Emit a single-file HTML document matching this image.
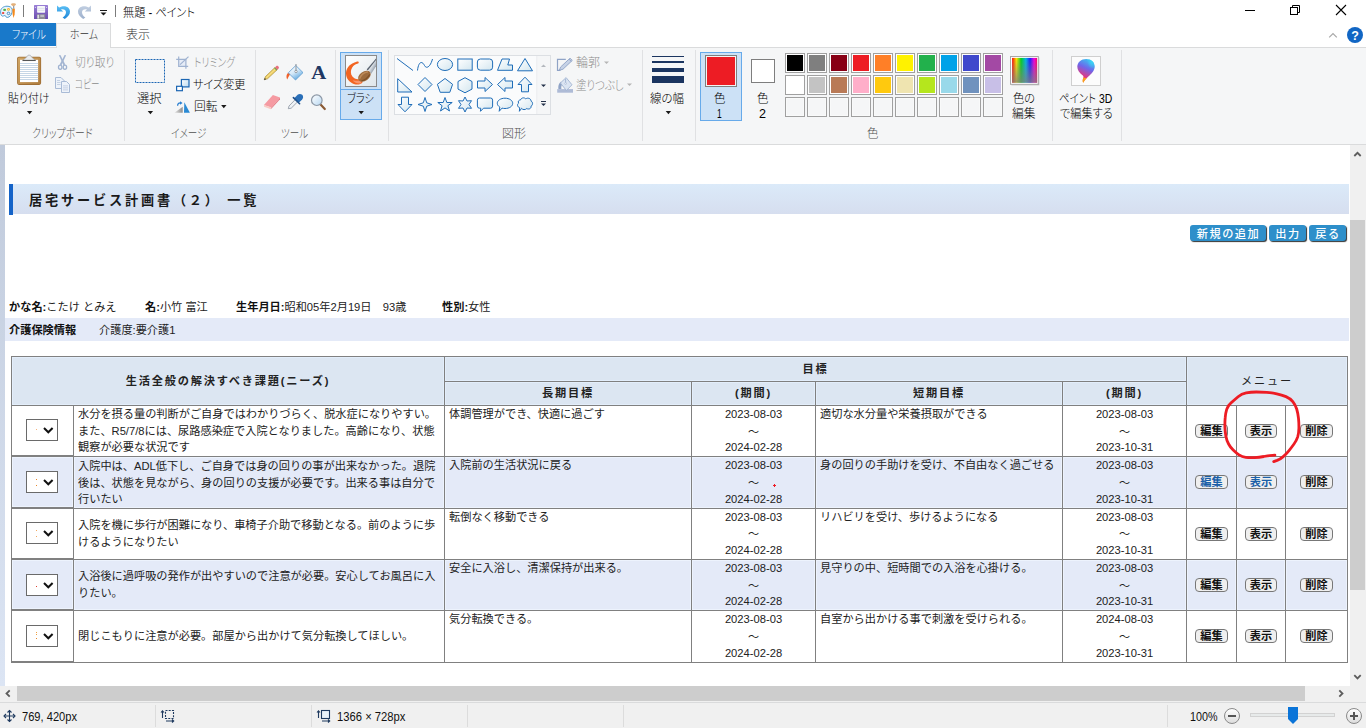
<!DOCTYPE html>
<html lang="ja">
<head>
<meta charset="utf-8">
<title>無題 - ペイント</title>
<style>
*{box-sizing:border-box;margin:0;padding:0}
html,body{width:1366px;height:728px;overflow:hidden;background:#fff}
body{position:relative;font-family:"Liberation Sans","Noto Sans CJK JP",sans-serif;font-size:12px;color:#1e1e1e}
.abs{position:absolute}
svg{position:absolute;overflow:visible}
/* ---------- paint chrome ---------- */
#titlebar{position:absolute;left:0;top:0;width:1366px;height:23px;background:#fff}
#title{position:absolute;left:123px;top:3px;font-size:12px;line-height:16px;color:#000;white-space:nowrap}
#tabs{position:absolute;left:0;top:23px;width:1366px;height:25px;background:#fff;border-bottom:1px solid #dadbdc}
.tab{position:absolute;top:0;height:24px;line-height:22px;text-align:center;font-size:12px;color:#3b3b3b;white-space:nowrap}
#tab-file{left:0;width:56px;height:23px;background:#1979ca;color:#fff}
#tab-home{left:56px;width:55px;background:#f5f6f7;border:1px solid #dadbdc;border-bottom:none;height:25px}
#tab-view{left:110px;width:55px}
#ribbon{position:absolute;left:0;top:48px;width:1366px;height:97px;background:#f5f6f7;border-bottom:1px solid #dadbdc}
.sep{position:absolute;top:5px;width:1px;height:86px;background:#e2e3e4}
.glabel{position:absolute;top:78px;height:16px;line-height:16px;font-size:12px;color:#5f5f5f;text-align:center;white-space:nowrap}
.rtxt{position:absolute;font-size:12px;line-height:16px;color:#1e1e1e;white-space:nowrap}
.dis{color:#9d9d9d}
.arrow{position:absolute;width:0;height:0;border-left:3px solid transparent;border-right:3px solid transparent;border-top:3px solid #1e1e1e}
/* ---------- work area ---------- */
#work{position:absolute;left:0;top:145px;width:1350px;height:541px;background:#fff;overflow:hidden}
#strip{position:absolute;left:0;top:0;width:5px;height:541px;background:linear-gradient(#c0cadb,#dce5f4)}
#vscroll{position:absolute;left:1350px;top:145px;width:16px;height:541px;background:#f0f0f0}
#vthumb{position:absolute;left:0;top:75px;width:15px;height:370px;background:#cdcdcd}
#hscroll{position:absolute;left:0;top:686px;width:1366px;height:16px;background:#f0f0f0}
#hthumb{position:absolute;left:17px;top:0;width:1288px;height:15px;background:#cdcdcd}
#status{position:absolute;left:0;top:702px;width:1366px;height:26px;background:#f0f0f0;border-top:1px solid #dadbdc}
.stxt{position:absolute;top:5px;font-size:12px;line-height:16px;color:#1e1e1e;white-space:nowrap}
.ssep{position:absolute;top:2px;width:1px;height:22px;background:#dcdcdc}
/* ---------- web page inside canvas (coordinates are page coords minus work offset) ---------- */
#web{position:absolute;left:0;top:-145px;width:1350px;height:728px;font-family:"Liberation Sans","Noto Sans CJK JP",sans-serif;font-size:11.2px;color:#222}
#hband{position:absolute;left:13px;top:184px;width:1336px;height:30px;background:linear-gradient(#dbeaf9,#d6deef)}
#hbar{position:absolute;left:9px;top:184px;width:4px;height:31px;background:#1463c8}
#htitle{position:absolute;left:29px;top:190px;font-size:13.2px;line-height:22px;font-weight:bold;letter-spacing:2.8px;color:#1a1a1a;white-space:nowrap}
.bbtn{position:absolute;top:225px;height:16px;background:#2e8fca;border-radius:3px;box-shadow:1px 1px 1px #333;color:#fff;font-weight:500;font-size:11.2px;line-height:18px;overflow:hidden;text-align:center;letter-spacing:1.5px;text-indent:1px;white-space:nowrap}
.info{position:absolute;font-size:11.2px;line-height:16px;white-space:nowrap;color:#222}
.info b{color:#111}
#iband{position:absolute;left:5px;top:318px;width:1344px;height:23px;background:#e4eaf8}
/* table */
.cell{position:absolute;border:1px solid #808080;background:#fff;overflow:hidden}
.hd{background:#dce6f2;box-shadow:inset 0 0 0 1px #e3eefb;font-weight:bold;font-size:11.2px;letter-spacing:1.8px;text-align:center;color:#222;white-space:nowrap}
.ev{background:#e4eaf8;box-shadow:inset 0 0 0 1px #edf3fd}
.c1{border-bottom-width:2px}
.tx{position:absolute;left:4px;top:0px;font-size:11.2px;line-height:16.6px;white-space:nowrap;color:#222}
.dt{position:absolute;left:0;top:0px;width:100%;text-align:center;font-size:11.2px;line-height:16.6px;white-space:nowrap;color:#222}
.sbtn{position:absolute;height:14px;border:1px solid #777;border-radius:4px;background:#efefef;font-size:11.2px;font-weight:bold;line-height:12px;text-align:center;color:#111;white-space:nowrap}
.sel{position:absolute;left:14px;width:32px;height:22px;border:1px solid #6a6a6a;background:#fff}
/* ---------- ribbon text ---------- */
.rt{position:absolute;height:16px;line-height:16px;font-size:12px;font-weight:300;white-space:nowrap;transform-origin:0 50%;font-feature-settings:'palt';z-index:5}
.c-ttl{color:#000}
.c-tabf{color:#fff}
.c-tab{color:#333}
.c-r{color:#000}
.c-r.c-dis{color:#8c8c8c}
.c-g{color:#505050}
.c-s{color:#111}

</style>
</head>
<body>
<div id="titlebar"></div>
<div id="tabs">
  <div class="tab" id="tab-file"></div>
  <div class="tab" id="tab-home"></div>
</div>
<div id="ribbon"></div>
<!-- title bar icons -->
<svg id="svg-title" style="left:0;top:0" width="1366" height="47" viewBox="0 0 1366 47">
  <defs>
    <linearGradient id="gUndo" x1="0" y1="0" x2="0" y2="1"><stop offset="0" stop-color="#5cc0f5"/><stop offset="1" stop-color="#1e86d8"/></linearGradient>
    <linearGradient id="gRedo" x1="0" y1="0" x2="0" y2="1"><stop offset="0" stop-color="#c3d0e2"/><stop offset="1" stop-color="#9db0cc"/></linearGradient>
    <linearGradient id="gSave" x1="0" y1="0" x2="0" y2="1"><stop offset="0" stop-color="#9a7fd6"/><stop offset="1" stop-color="#6a4bb0"/></linearGradient>
  </defs>
  <!-- app icon: palette + brush -->
  <path d="M0.600 11.800 C0.400 8.300 3.600 6.200 7 6.200 C9.800 6.200 12 7.400 12.200 9.600 C12.400 12 11.800 13.600 10.800 15.200 C10 16.600 8.200 17.600 6.800 17.400 C5.600 17.200 6.200 15.800 5 15.600 C3.600 15.400 3.200 16.600 2 16 C0.800 15.200 0.700 13.600 0.600 11.800 Z" fill="#eaf4fb" stroke="#4f9bd1" stroke-width="1"/>
  <ellipse cx="4.600" cy="9.900" rx="1.500" ry="1.100" fill="#4cb04a"/>
  <circle cx="8.500" cy="9.400" r="1.400" fill="#f7b52a"/><circle cx="8.500" cy="9.400" r="0.500" fill="#fde9b0"/>
  <rect x="2.100" y="12.100" width="2.100" height="2" rx="0.500" fill="#ea4a42"/>
  <circle cx="8.500" cy="13.400" r="1.300" fill="#e8f2fa" stroke="#3c86c4" stroke-width="0.900"/>
  <path d="M12.300 9 C12.300 8.400 14.900 8.400 14.900 9 L14.600 14.500 L13.500 18 L12.700 14.500 Z" fill="#f68a1c"/>
  <rect x="13" y="5.700" width="1.300" height="3.100" fill="#9aa0a8"/>
  <path d="M11 4.200 C11.400 2.800 15.600 2.800 16 4.200 C15.600 5.600 14.600 5.900 13.500 5.900 C12.400 5.900 11.400 5.600 11 4.200 Z" fill="#e3b07a"/>
  <!-- separators -->
  <rect x="23" y="5" width="1" height="12" fill="#7c7c7c"/>
  <rect x="115" y="5" width="1" height="12" fill="#7c7c7c"/>
  <!-- save -->
  <rect x="34" y="5" width="14" height="14" rx="0.600" fill="url(#gSave)"/>
  <rect x="37.100" y="5.900" width="8" height="6.800" rx="0.600" fill="#f6f7fa"/>
  <rect x="37.600" y="7.900" width="7" height="0.700" fill="#d3dae4"/>
  <rect x="37.600" y="9.900" width="7" height="0.700" fill="#d3dae4"/>
  <rect x="36.900" y="14.300" width="8.300" height="4.700" fill="#8d8d96"/>
  <rect x="37.500" y="14.800" width="1.300" height="3.700" fill="#f0f0f5"/>
  <rect x="40.300" y="14.800" width="3.800" height="2.200" fill="#bcbcc4"/>
  <rect x="34.900" y="6.900" width="1" height="1" fill="#e6dcf5"/><rect x="46.100" y="6.900" width="1" height="1" fill="#e6dcf5"/>
  <!-- undo -->
  <path d="M57 5.5 L57 11.6 L63.2 11.6 L61 9.4 C63.6 8.6 66 9.8 66 12.2 C66 14.4 64.6 16 62.6 17.6 L64.8 19 C68 17 70 14.6 70 11.6 C70 7 64.6 4.4 59.2 7.6 Z" fill="url(#gUndo)"/>
  <!-- redo -->
  <path d="M91 5.5 L91 11.6 L84.8 11.6 L87 9.4 C84.4 8.6 82 9.8 82 12.2 C82 14.4 83.4 16 85.4 17.6 L83.2 19 C80 17 78 14.6 78 11.6 C78 7 83.4 4.4 88.8 7.6 Z" fill="url(#gRedo)"/>
  <!-- customize QAT -->
  <rect x="100" y="10" width="7" height="1" fill="#1a1a1a"/>
  <path d="M100.5 12.5 L106.5 12.5 L103.5 15.5 Z" fill="#1a1a1a"/>
  <!-- window controls -->
  <rect x="1245" y="10" width="10" height="1" fill="#000"/>
  <path d="M1292.5 7.5 V5.5 H1299.5 V12.5 H1297.5" fill="none" stroke="#000" stroke-width="1"/>
  <rect x="1290.500" y="7.500" width="7" height="7" fill="none" stroke="#000" stroke-width="1"/>
  <path d="M1336 5 L1346 15 M1346 5 L1336 15" stroke="#000" stroke-width="1.1" fill="none"/>
  <!-- collapse ribbon + help -->
  <path d="M1329.200 37.300 L1333 33.500 L1336.800 37.300" fill="none" stroke="#a8a8a8" stroke-width="1.2"/>
  <circle cx="1355" cy="35" r="8" fill="#1166c4"/>
  <text x="1355" y="39.500" text-anchor="middle" font-family="Liberation Sans, sans-serif" font-weight="bold" font-size="12.500" fill="#fff">?</text>
</svg>

<svg id="svg-ribbon" style="left:0;top:0;z-index:4" width="1366" height="146" viewBox="0 0 1366 146">
<defs>
<linearGradient id="gBoard" x1="0" y1="0" x2="1" y2="1"><stop offset="0" stop-color="#d0a564"/><stop offset="1" stop-color="#b07d3e"/></linearGradient>
<linearGradient id="gShape" x1="0" y1="0" x2="1" y2="1"><stop offset="0" stop-color="#ffffff"/><stop offset="1" stop-color="#d3e6ef"/></linearGradient>
<linearGradient id="gBucket" x1="0.2" y1="0" x2="0.8" y2="1"><stop offset="0" stop-color="#ffffff"/><stop offset="0.45" stop-color="#d3e8f8"/><stop offset="1" stop-color="#4a9cda"/></linearGradient>
<linearGradient id="gRes" x1="0" y1="0" x2="1" y2="1"><stop offset="0" stop-color="#ffffff"/><stop offset="1" stop-color="#b9d9f0"/></linearGradient>
<linearGradient id="gGrayTri" x1="0" y1="0" x2="1" y2="0"><stop offset="0" stop-color="#e6e6e6"/><stop offset="1" stop-color="#8e8e8e"/></linearGradient>
<linearGradient id="gHandle" x1="0.2" y1="0.2" x2="0.8" y2="0.8"><stop offset="0" stop-color="#77818d"/><stop offset="0.45" stop-color="#eef2f5"/><stop offset="1" stop-color="#8a96a4"/></linearGradient>
<linearGradient id="gBrushBg" x1="0" y1="0" x2="1" y2="1"><stop offset="0" stop-color="#ffffff"/><stop offset="1" stop-color="#dfe6ea"/></linearGradient>
<linearGradient id="gRainbow" x1="0" y1="0" x2="1" y2="0"><stop offset="0" stop-color="#ff0000"/><stop offset="0.17" stop-color="#ffe600"/><stop offset="0.36" stop-color="#00d020"/><stop offset="0.55" stop-color="#00b4e8"/><stop offset="0.72" stop-color="#1a1aff"/><stop offset="0.88" stop-color="#f000e0"/><stop offset="1" stop-color="#ff0060"/></linearGradient>
<linearGradient id="gRainShade" x1="0" y1="0" x2="0" y2="1"><stop offset="0" stop-color="#808080" stop-opacity="0"/><stop offset="1" stop-color="#808080" stop-opacity="0.8"/></linearGradient>
<linearGradient id="gP3D" x1="0.7" y1="0" x2="0.35" y2="1"><stop offset="0" stop-color="#35c8f2"/><stop offset="0.4" stop-color="#6f66ea"/><stop offset="0.78" stop-color="#e8357c"/><stop offset="1" stop-color="#f6801f"/></linearGradient>
<radialGradient id="gP3Dh" cx="0.7" cy="0.2" r="0.6"><stop offset="0" stop-color="#3ad6f5"/><stop offset="1" stop-color="#3ad6f5" stop-opacity="0"/></radialGradient>
<linearGradient id="gLens" x1="0" y1="0" x2="1" y2="1"><stop offset="0" stop-color="#ffffff"/><stop offset="1" stop-color="#b8d8f2"/></linearGradient>
</defs>
<rect x="124" y="50" width="1" height="91" fill="#e0e1e3"/>
<rect x="255" y="50" width="1" height="91" fill="#e0e1e3"/>
<rect x="335" y="50" width="1" height="91" fill="#e0e1e3"/>
<rect x="388" y="50" width="1" height="91" fill="#e0e1e3"/>
<rect x="642" y="50" width="1" height="91" fill="#e0e1e3"/>
<rect x="695" y="50" width="1" height="91" fill="#e0e1e3"/>
<rect x="1052" y="50" width="1" height="91" fill="#e0e1e3"/>
<rect x="1121" y="50" width="1" height="91" fill="#e0e1e3"/>
<rect x="17.100" y="56.800" width="24" height="28.100" rx="1.800" fill="#a06f35"/>
<rect x="17.900" y="57.600" width="22.400" height="26.500" rx="1.200" fill="url(#gBoard)"/>
<rect x="20" y="59.800" width="18.100" height="22.300" fill="#ffffff"/>
<rect x="20" y="63" width="18.100" height="1" fill="#c5d6e6"/>
<rect x="20" y="65" width="18.100" height="1" fill="#c5d6e6"/>
<rect x="20" y="67" width="18.100" height="1" fill="#c5d6e6"/>
<rect x="20" y="69" width="18.100" height="1" fill="#c5d6e6"/>
<rect x="20" y="71" width="18.100" height="1" fill="#c5d6e6"/>
<rect x="20" y="73" width="18.100" height="1" fill="#c5d6e6"/>
<rect x="20" y="75" width="18.100" height="1" fill="#c5d6e6"/>
<rect x="20" y="77" width="18.100" height="1" fill="#c5d6e6"/>
<rect x="20" y="79" width="18.100" height="1" fill="#c5d6e6"/>
<path d="M22.600 60.600 L26.500 57.200 L28 55.200 H30.200 L31.700 57.200 L35.600 60.600 Z" fill="#e9ecef" stroke="#9aa0a6" stroke-width="0.6"/>
<rect x="22.600" y="59.900" width="13" height="1" fill="#4a4a4a"/>
<path d="M26.9 111 H32.3 L29.6 114.2 Z" fill="#1a1a1a"/>
<g fill="#a3b5d2"><path d="M58.900 55.200 L60.400 55 L65.300 64.600 L63.500 65.300 Z"/><path d="M66.100 55.200 L64.600 55 L59.700 64.600 L61.500 65.300 Z"/></g>
<g fill="none" stroke="#9fb2d0" stroke-width="1.300"><ellipse cx="60.200" cy="67.300" rx="1.700" ry="2.100"/><ellipse cx="64.900" cy="67.300" rx="1.700" ry="2.100"/></g>
<g fill="#eef3fa" stroke="#a9bbd6" stroke-width="1"><path d="M55.500 77.500 H61 L64.500 81 V88.500 H55.500 Z"/><path d="M61.500 81.500 H66.500 L69.500 84.500 V92.500 H61.500 Z"/></g>
<g fill="#b9c8de"><rect x="57" y="80" width="3" height="0.8"/><rect x="57" y="82" width="3.500" height="0.8"/><rect x="57" y="84" width="3.500" height="0.8"/><rect x="63" y="85.500" width="5" height="0.8"/><rect x="63" y="87.500" width="5" height="0.8"/><rect x="63" y="89.500" width="5" height="0.8"/></g>
<rect x="135.500" y="59.500" width="29" height="23" fill="none" stroke="#1b66b4" stroke-width="1" stroke-dasharray="2 1"/>
<path d="M147.7 111 H153.1 L150.4 114.2 Z" fill="#1a1a1a"/>
<rect x="178.700" y="59.300" width="7.200" height="7" fill="#e6ecf7"/>
<g fill="none" stroke="#9fb2d0" stroke-width="1.200"><path d="M178.700 56.500 V66.300 H188.200"/><path d="M176.200 59.300 H185.900 V68.800"/><path d="M180 64.600 L188.500 56.600"/></g>
<rect x="181.400" y="79.500" width="7.600" height="7.400" fill="url(#gRes)" stroke="#1c66b3" stroke-width="1.200"/>
<rect x="176.600" y="86.300" width="5.800" height="4.400" fill="#fff" stroke="#1c66b3" stroke-width="1.200"/>
<path d="M174.400 112.700 L182.700 112.700 L182.700 106.800 Z" fill="url(#gGrayTri)"/>
<path d="M184 112.700 L189.900 112.700 L184.300 102.200 Z" fill="#2a8ad4"/>
<path d="M177.600 105.800 C177.600 103.800 178.800 102.600 180.600 102.800" fill="none" stroke="#2a7fd0" stroke-width="1.300"/>
<path d="M180 101.200 L182.600 102.900 L180 104.700 Z" fill="#2a7fd0"/>
<path d="M221.1 105 H226.5 L223.8 108.2 Z" fill="#1a1a1a"/>
<path d="M264.200 79.800 L265.400 76.600 L275 67.400 L277.200 69.700 L267.500 78.800 Z" fill="#f0cf62" stroke="#9c8438" stroke-width="0.6"/>
<path d="M266.300 77.800 L276 68.600" stroke="#fae9a0" stroke-width="0.8" fill="none"/>
<path d="M264 80 L264.800 77.900 L266.200 79.300 Z" fill="#3a3a3a"/>
<path d="M275 67.400 L276.300 66.100 C276.800 65.600 277.500 65.600 278 66.100 L278.600 66.700 C279.100 67.200 279.100 67.900 278.600 68.400 L277.200 69.700 Z" fill="#e8707e"/>
<path d="M274.200 68.200 L275 67.400 L277.200 69.700 L276.400 70.500 Z" fill="#6aa04a"/>
<path d="M288 73 C286 74.500 286.300 78 287.300 79.500 C288.300 77 289.300 75 291 73.500 Z" fill="#f2612a"/>
<path d="M295.800 65.500 L303 72.600 L295.500 80 L288.300 72.800 Z" fill="url(#gBucket)" stroke="#5a9bd0" stroke-width="0.8"/>
<path d="M296 64 V71" stroke="#8a8f96" stroke-width="1" fill="none"/><circle cx="296" cy="71.500" r="1.200" fill="#fff" stroke="#7a8088" stroke-width="0.7"/>
<text x="0" y="0" transform="translate(318.800 79) scale(1.12 1)" text-anchor="middle" font-family="Liberation Serif, serif" font-weight="bold" font-size="18.500" fill="#1f3864">A</text>
<path d="M263.900 105 L272.900 95 L280 97.500 L271.400 107.400 Z" fill="#f59aa2"/>
<path d="M263.900 105 L271.400 107.400 L270.900 109.200 L264.100 106.700 Z" fill="#f9c9c2"/>
<path d="M271.400 107.400 L280 97.500 L280 99.300 L270.900 109.200 Z" fill="#e67a84"/>
<path d="M288.300 108.700 L289 106 L295.500 99.300 L297.800 101.600 L291.200 108.200 Z" fill="#eef2f6" stroke="#8a93a0" stroke-width="0.8"/>
<path d="M294.300 98.300 L297.600 94.800 C298.800 93.600 301 93.600 302.200 94.800 C303.400 96 303.400 98.200 302.200 99.400 L298.800 102.800 Z" fill="#2a6fb8"/>
<path d="M293.400 97.600 L299.600 103.700" stroke="#1d4f8a" stroke-width="1.600" fill="none" stroke-linecap="round"/>
<path d="M320.800 104.800 L324.800 109" stroke="#8a5a34" stroke-width="2.200" stroke-linecap="round" fill="none"/>
<circle cx="316.800" cy="100.200" r="5.300" fill="url(#gLens)" stroke="#8c98a6" stroke-width="1.200"/>
<rect x="340.500" y="52.500" width="41" height="67" fill="#cce1f6" stroke="#67aaea" stroke-width="1"/>
<rect x="341" y="89" width="40" height="1" fill="#67aaea"/>
<rect x="345.500" y="55.500" width="31" height="31" fill="url(#gBrushBg)" stroke="#8a8a8a" stroke-width="1"/>
<path d="M358.200 61.600 C359.400 62.600 358.600 63.600 357.200 63.800 C355.400 64.200 353.600 65.400 352.200 67.600 C350.400 70.400 350.400 74 352.400 76.600 C354 78.600 356.600 79.600 359.600 79 L362.600 82.600 C360.800 84.600 357.200 85.200 353.800 84 C349.400 82.400 346.200 78.600 346 73.800 C345.800 68.800 349.400 64.400 354 62.800 C355.600 62.200 357 61.400 358.200 61.600 Z" fill="#f26522"/>
<path d="M352.600 80.600 C355 83.200 358.400 84.200 361.600 83.200 L360.200 80.200 C357.600 80.800 355 80.800 352.600 80.600 Z" fill="#f7936a"/>
<path d="M366.600 69.200 L376 58.200 L376 66.200 L371.200 73.800 Z" fill="url(#gHandle)"/>
<path d="M366.800 69.400 L376 58.600 L376 60 L367.800 70.400 Z" fill="#59626e"/>
<ellipse cx="0" cy="0" rx="7" ry="4.600" transform="translate(364.400 76.200) rotate(-35)" fill="#9c6b3c"/>
<path d="M359.600 78.800 C360.600 75.600 364 72.600 368 71.800" stroke="#bd8a58" stroke-width="1.400" fill="none"/>
<path d="M361.400 81 C364.400 80.400 368 77.600 369.800 74.400" stroke="#7e5128" stroke-width="1.200" fill="none"/>
<path d="M358.5 111 H363.9 L361.2 114.2 Z" fill="#1a1a1a"/>
<rect x="394.500" y="55.500" width="156" height="59" fill="#fafbfc" stroke="#dcdfe3" stroke-width="1"/>
<rect x="536.500" y="56" width="1" height="58" fill="#e3e5e8"/>
<rect x="537.500" y="56" width="12.500" height="58" fill="#f5f6f7"/>
<path d="M541 67 H546 L543.500 64.500 Z" fill="#b4b8be"/>
<path d="M541 84.500 H546 L543.500 87 Z" fill="#24324a"/>
<rect x="541" y="101" width="5" height="1" fill="#24324a"/><path d="M541 103.500 H546 L543.500 106 Z" fill="#24324a"/>
<g transform="translate(405 64.5)"><path d="M-8 -6 L8 6" fill="none" stroke="#1f6db8" stroke-width="1"/></g>
<g transform="translate(425 64.5)"><path d="M-7.500 6 C-6.500 -3 -3 -4 -0.500 1 C1.500 5 5.500 2 7.500 -5.500" fill="none" stroke="#1f6db8" stroke-width="1"/></g>
<g transform="translate(445 64.5)"><ellipse cx="0" cy="0" rx="7.600" ry="6" fill="url(#gShape)" stroke="#1f6db8" stroke-width="1" stroke-linejoin="miter"/></g>
<g transform="translate(465 64.5)"><rect x="-7.200" y="-5.500" width="14.400" height="11.200" fill="url(#gShape)" stroke="#1f6db8" stroke-width="1" stroke-linejoin="miter"/></g>
<g transform="translate(485 64.5)"><rect x="-7.600" y="-5.500" width="15.200" height="11.200" rx="3" fill="url(#gShape)" stroke="#1f6db8" stroke-width="1" stroke-linejoin="miter"/></g>
<g transform="translate(505 64.5)"><path d="M-7.500 5.800 L-3 -5.500 L4.500 -5.500 L2.800 0.500 L7.500 0.500 L7.500 5.800 Z" fill="url(#gShape)" stroke="#1f6db8" stroke-width="1" stroke-linejoin="miter"/></g>
<g transform="translate(525 64.5)"><path d="M-7.500 6.300 L0 -6 L7.500 6.300 Z" fill="url(#gShape)" stroke="#1f6db8" stroke-width="1" stroke-linejoin="miter"/></g>
<g transform="translate(405 84.5)"><path d="M-7.300 -5.800 L-7.300 7.500 L7 7.500 Z" fill="url(#gShape)" stroke="#1f6db8" stroke-width="1" stroke-linejoin="miter"/></g>
<g transform="translate(425 84.5)"><path d="M0 -7 L7 0 L0 7 L-7 0 Z" fill="url(#gShape)" stroke="#1f6db8" stroke-width="1" stroke-linejoin="miter"/></g>
<g transform="translate(445 84.5)"><path d="M0 -6 L7.600 -0.200 L4.800 7.800 L-4.800 7.800 L-7.600 -0.200 Z" fill="url(#gShape)" stroke="#1f6db8" stroke-width="1" stroke-linejoin="miter"/></g>
<g transform="translate(465 84.5)"><path d="M0 -6.800 L7 -3 L7 4.600 L0 8.300 L-7 4.600 L-7 -3 Z" fill="url(#gShape)" stroke="#1f6db8" stroke-width="1" stroke-linejoin="miter"/></g>
<g transform="translate(485 84.5)"><path d="M-7.500 -3.500 L0 -3.500 L0 -7 L7.500 0 L0 7 L0 3.500 L-7.500 3.500 Z" fill="url(#gShape)" stroke="#1f6db8" stroke-width="1" stroke-linejoin="miter"/></g>
<g transform="translate(505 84.5)"><path d="M7.500 -3.500 L0 -3.500 L0 -7 L-7.500 0 L0 7 L0 3.500 L7.500 3.500 Z" fill="url(#gShape)" stroke="#1f6db8" stroke-width="1" stroke-linejoin="miter"/></g>
<g transform="translate(525 84.5)"><path d="M-3.500 7.300 L-3.500 0 L-7 0 L0 -7.300 L7 0 L3.500 0 L3.500 7.300 Z" fill="url(#gShape)" stroke="#1f6db8" stroke-width="1" stroke-linejoin="miter"/></g>
<g transform="translate(405 104.5)"><path d="M-3.500 -7.300 L-3.500 0 L-7 0 L0 7.300 L7 0 L3.500 0 L3.500 -7.300 Z" fill="url(#gShape)" stroke="#1f6db8" stroke-width="1" stroke-linejoin="miter"/></g>
<g transform="translate(425 104.5)"><path d="M0 -7 L1.700 -1.700 L7 0 L1.700 1.700 L0 7 L-1.700 1.700 L-7 0 L-1.700 -1.700 Z" fill="url(#gShape)" stroke="#1f6db8" stroke-width="1" stroke-linejoin="miter"/></g>
<g transform="translate(445 104.5)"><path d="M0 -7 L1.800 -2 L7.200 -2 L2.900 1.200 L4.500 6.500 L0 3.400 L-4.500 6.500 L-2.900 1.200 L-7.200 -2 L-1.800 -2 Z" fill="url(#gShape)" stroke="#1f6db8" stroke-width="1" stroke-linejoin="miter"/></g>
<g transform="translate(465 104.5)"><path d="M0 -7.500 L2 -3.500 L6.500 -3.800 L4 0 L6.500 3.800 L2 3.500 L0 7.500 L-2 3.500 L-6.500 3.800 L-4 0 L-6.500 -3.800 L-2 -3.500 Z" fill="url(#gShape)" stroke="#1f6db8" stroke-width="1" stroke-linejoin="miter"/></g>
<g transform="translate(485 104.5)"><path d="M-5.500 -6.500 H5.500 Q7.600 -6.500 7.600 -4.400 V1.600 Q7.600 3.700 5.500 3.700 H-1.500 L-4.500 6.800 L-4.300 3.700 H-5.500 Q-7.600 3.700 -7.600 1.600 V-4.400 Q-7.600 -6.500 -5.500 -6.500 Z" fill="url(#gShape)" stroke="#1f6db8" stroke-width="1" stroke-linejoin="miter"/></g>
<g transform="translate(505 104.5)"><path d="M0 -6.300 C4.400 -6.300 7.700 -4 7.700 -1.200 C7.700 1.800 4.400 4 0 4 C-1 4 -2 3.900 -3 3.600 L-5.800 6.800 L-5.200 2.600 C-6.800 1.600 -7.700 0.300 -7.700 -1.200 C-7.700 -4 -4.400 -6.300 0 -6.300 Z" fill="url(#gShape)" stroke="#1f6db8" stroke-width="1" stroke-linejoin="miter"/></g>
<g transform="translate(525 104.5)"><path d="M-4.500 -4.500 C-3.800 -7 -0.500 -7.200 0.800 -5.600 C2.600 -7.200 6.200 -6 6 -3.400 C8.200 -2.500 8 0.800 6 1.600 C6.600 4 3.600 5.300 1.800 4 C0.500 5.600 -2.600 5.400 -3.400 3.800 L-5.600 6.800 L-5.300 3.200 C-7.600 2.600 -8.200 -0.200 -6.400 -1.400 C-7.400 -3 -6.200 -4.600 -4.500 -4.500 Z" fill="url(#gShape)" stroke="#1f6db8" stroke-width="1" stroke-linejoin="miter"/></g>
<path d="M565.800 59.300 H557.500 V70.300 H560.500" fill="none" stroke="#8fa3c6" stroke-width="1.200"/>
<path d="M559.300 70.300 L560.600 67 L570 58.200 L572.300 60.400 L563 69.200 Z" fill="#c6d2e6" stroke="#8fa3c6" stroke-width="0.900"/>
<path d="M569 59.200 L571.300 61.400" stroke="#8fa3c6" stroke-width="0.900" fill="none"/>
<rect x="557.200" y="89.100" width="15.800" height="3.600" fill="#aebbd6"/>
<path d="M560.800 81.800 C558.600 83.600 558 86.400 558.400 89.100 L561.400 89.100 C561 86.600 561.600 84.600 563 83.200 Z" fill="#8fa3c6"/>
<path d="M566.100 77.600 L572 84.800 L566.400 90.500 L560.400 83 Z" fill="#dbe4f2" stroke="#9fb2d0" stroke-width="0.900"/>
<path d="M565.600 79 V83" stroke="#9fb2d0" stroke-width="0.900" fill="none"/><circle cx="565.600" cy="83.500" r="0.900" fill="#f5f7fb" stroke="#9fb2d0" stroke-width="0.600"/>
<path d="M604 61.500 H609 L606.500 64 Z" fill="#b5b5b5"/>
<path d="M627 83.500 H632 L629.500 86 Z" fill="#b5b5b5"/>
<g fill="#1b3560"><rect x="652" y="56" width="32" height="1"/><rect x="652" y="61" width="32" height="2"/><rect x="652" y="68" width="32" height="4"/><rect x="652" y="76" width="32" height="7"/></g>
<path d="M665.7 111 H671.1 L668.4 114.2 Z" fill="#1a1a1a"/>
<rect x="700.500" y="52.500" width="41" height="68" fill="#cce1f6" stroke="#67aaea" stroke-width="1"/>
<rect x="705.500" y="55.500" width="31" height="31" fill="#f3f3f3" stroke="#7e7e7e" stroke-width="1"/>
<rect x="707" y="57" width="28" height="28" fill="#ed1c24"/>
<rect x="751.500" y="59.500" width="23" height="23" fill="#fff" stroke="#7e7e7e" stroke-width="1"/>
<rect x="785.5" y="53.5" width="19" height="19" fill="#fff" stroke="#a0a0a0" stroke-width="1"/>
<rect x="787" y="55" width="16" height="16" fill="#000000"/>
<rect x="785.5" y="75.5" width="19" height="19" fill="#fff" stroke="#a0a0a0" stroke-width="1"/>
<rect x="787" y="77" width="16" height="16" fill="#ffffff"/>
<rect x="785.5" y="97.5" width="19" height="19" fill="#f9fafa" stroke="#a0a0a0" stroke-width="1"/>
<rect x="787" y="99" width="16" height="16" fill="#f5f6f7"/>
<rect x="807.5" y="53.5" width="19" height="19" fill="#fff" stroke="#a0a0a0" stroke-width="1"/>
<rect x="809" y="55" width="16" height="16" fill="#7f7f7f"/>
<rect x="807.5" y="75.5" width="19" height="19" fill="#fff" stroke="#a0a0a0" stroke-width="1"/>
<rect x="809" y="77" width="16" height="16" fill="#c3c3c3"/>
<rect x="807.5" y="97.5" width="19" height="19" fill="#f9fafa" stroke="#a0a0a0" stroke-width="1"/>
<rect x="809" y="99" width="16" height="16" fill="#f5f6f7"/>
<rect x="829.5" y="53.5" width="19" height="19" fill="#fff" stroke="#a0a0a0" stroke-width="1"/>
<rect x="831" y="55" width="16" height="16" fill="#880015"/>
<rect x="829.5" y="75.5" width="19" height="19" fill="#fff" stroke="#a0a0a0" stroke-width="1"/>
<rect x="831" y="77" width="16" height="16" fill="#b97a57"/>
<rect x="829.5" y="97.5" width="19" height="19" fill="#f9fafa" stroke="#a0a0a0" stroke-width="1"/>
<rect x="831" y="99" width="16" height="16" fill="#f5f6f7"/>
<rect x="851.5" y="53.5" width="19" height="19" fill="#fff" stroke="#a0a0a0" stroke-width="1"/>
<rect x="853" y="55" width="16" height="16" fill="#ed1c24"/>
<rect x="851.5" y="75.5" width="19" height="19" fill="#fff" stroke="#a0a0a0" stroke-width="1"/>
<rect x="853" y="77" width="16" height="16" fill="#ffaec9"/>
<rect x="851.5" y="97.5" width="19" height="19" fill="#f9fafa" stroke="#a0a0a0" stroke-width="1"/>
<rect x="853" y="99" width="16" height="16" fill="#f5f6f7"/>
<rect x="873.5" y="53.5" width="19" height="19" fill="#fff" stroke="#a0a0a0" stroke-width="1"/>
<rect x="875" y="55" width="16" height="16" fill="#ff7f27"/>
<rect x="873.5" y="75.5" width="19" height="19" fill="#fff" stroke="#a0a0a0" stroke-width="1"/>
<rect x="875" y="77" width="16" height="16" fill="#ffc90e"/>
<rect x="873.5" y="97.5" width="19" height="19" fill="#f9fafa" stroke="#a0a0a0" stroke-width="1"/>
<rect x="875" y="99" width="16" height="16" fill="#f5f6f7"/>
<rect x="895.5" y="53.5" width="19" height="19" fill="#fff" stroke="#a0a0a0" stroke-width="1"/>
<rect x="897" y="55" width="16" height="16" fill="#fff200"/>
<rect x="895.5" y="75.5" width="19" height="19" fill="#fff" stroke="#a0a0a0" stroke-width="1"/>
<rect x="897" y="77" width="16" height="16" fill="#efe4b0"/>
<rect x="895.5" y="97.5" width="19" height="19" fill="#f9fafa" stroke="#a0a0a0" stroke-width="1"/>
<rect x="897" y="99" width="16" height="16" fill="#f5f6f7"/>
<rect x="917.5" y="53.5" width="19" height="19" fill="#fff" stroke="#a0a0a0" stroke-width="1"/>
<rect x="919" y="55" width="16" height="16" fill="#22b14c"/>
<rect x="917.5" y="75.5" width="19" height="19" fill="#fff" stroke="#a0a0a0" stroke-width="1"/>
<rect x="919" y="77" width="16" height="16" fill="#b5e61d"/>
<rect x="917.5" y="97.5" width="19" height="19" fill="#f9fafa" stroke="#a0a0a0" stroke-width="1"/>
<rect x="919" y="99" width="16" height="16" fill="#f5f6f7"/>
<rect x="939.5" y="53.5" width="19" height="19" fill="#fff" stroke="#a0a0a0" stroke-width="1"/>
<rect x="941" y="55" width="16" height="16" fill="#00a2e8"/>
<rect x="939.5" y="75.5" width="19" height="19" fill="#fff" stroke="#a0a0a0" stroke-width="1"/>
<rect x="941" y="77" width="16" height="16" fill="#99d9ea"/>
<rect x="939.5" y="97.5" width="19" height="19" fill="#f9fafa" stroke="#a0a0a0" stroke-width="1"/>
<rect x="941" y="99" width="16" height="16" fill="#f5f6f7"/>
<rect x="961.5" y="53.5" width="19" height="19" fill="#fff" stroke="#a0a0a0" stroke-width="1"/>
<rect x="963" y="55" width="16" height="16" fill="#3f48cc"/>
<rect x="961.5" y="75.5" width="19" height="19" fill="#fff" stroke="#a0a0a0" stroke-width="1"/>
<rect x="963" y="77" width="16" height="16" fill="#7092be"/>
<rect x="961.5" y="97.5" width="19" height="19" fill="#f9fafa" stroke="#a0a0a0" stroke-width="1"/>
<rect x="963" y="99" width="16" height="16" fill="#f5f6f7"/>
<rect x="983.5" y="53.5" width="19" height="19" fill="#fff" stroke="#a0a0a0" stroke-width="1"/>
<rect x="985" y="55" width="16" height="16" fill="#a349a4"/>
<rect x="983.5" y="75.5" width="19" height="19" fill="#fff" stroke="#a0a0a0" stroke-width="1"/>
<rect x="985" y="77" width="16" height="16" fill="#c8bfe7"/>
<rect x="983.5" y="97.5" width="19" height="19" fill="#f9fafa" stroke="#a0a0a0" stroke-width="1"/>
<rect x="985" y="99" width="16" height="16" fill="#f5f6f7"/>
<rect x="1011.500" y="57.500" width="27.800" height="27.800" fill="#8a8a8a" opacity="0.55"/>
<rect x="1010.500" y="56.500" width="27.800" height="27.800" fill="#fff" stroke="#a8a8a8" stroke-width="1"/>
<rect x="1012.100" y="57.900" width="25" height="24.800" fill="url(#gRainbow)"/>
<rect x="1012.100" y="57.900" width="25" height="24.800" fill="url(#gRainShade)"/>
<rect x="1071.500" y="56.500" width="29" height="29" fill="#fcfcfc" stroke="#cfcfcf" stroke-width="1"/>
<path d="M1086.200 58.900 C1091.200 58.900 1094.700 62.300 1094.700 66.600 C1094.700 70.600 1091.600 73.800 1088.400 76.600 C1086.200 78.600 1084.400 80.600 1083.200 82.800 C1082.400 81.600 1082.600 79.600 1083.400 77.600 C1083.800 76.600 1083.200 75.800 1082.200 75 C1079.400 72.800 1077.300 70 1077.300 66.600 C1077.300 62.300 1081.200 58.900 1086.200 58.900 Z" fill="url(#gP3D)"/>
<path d="M1086.200 58.900 C1091.200 58.900 1094.700 62.300 1094.700 66.600 C1094.700 68.200 1094.200 69.700 1093.400 71 C1089.600 69.400 1086.400 65.600 1086.200 58.900 Z" fill="url(#gP3Dh)"/>
<path d="M1083.400 77.600 C1084.600 78 1085.800 78 1086.800 77.900 C1085.400 79.300 1084.100 81 1083.200 82.800 C1082.400 81.600 1082.600 79.600 1083.400 77.600 Z" fill="#f9a21c"/>
</svg>
<div class="rt c-ttl" style="left:122.5px;top:4.5px;transform:scaleX(0.931)">無題 - ペイント</div>
<div class="rt c-tabf" style="left:11.5px;top:27.0px;transform:scaleX(0.818)">ファイル</div>
<div class="rt c-tab" style="left:69.5px;top:27.0px;transform:scaleX(0.815)">ホーム</div>
<div class="rt c-tab" style="left:125.5px;top:27.0px;transform:scaleX(0.999)">表示</div>
<div class="rt c-r" style="left:8.0px;top:90.5px;transform:scaleX(0.908)">貼り付け</div>
<div class="rt c-r c-dis" style="left:74.5px;top:55.2px;transform:scaleX(0.898)">切り取り</div>
<div class="rt c-r c-dis" style="left:74.5px;top:77.3px;transform:scaleX(0.712)">コピー</div>
<div class="rt c-g" style="left:31.8px;top:126.0px;transform:scaleX(0.820)">クリップボード</div>
<div class="rt c-r" style="left:137.0px;top:90.5px;transform:scaleX(1.020)">選択</div>
<div class="rt c-r c-dis" style="left:193.5px;top:55.2px;transform:scaleX(0.812)">トリミング</div>
<div class="rt c-r" style="left:193.0px;top:77.4px;transform:scaleX(0.927)">サイズ変更</div>
<div class="rt c-r" style="left:193.5px;top:99.4px;transform:scaleX(0.979)">回転</div>
<div class="rt c-g" style="left:171.3px;top:126.0px;transform:scaleX(0.797)">イメージ</div>
<div class="rt c-g" style="left:281.0px;top:126.0px;transform:scaleX(0.795)">ツール</div>
<div class="rt c-r" style="left:346.9px;top:90.8px;transform:scaleX(0.844)">ブラシ</div>
<div class="rt c-r c-dis" style="left:576.0px;top:55.4px;transform:scaleX(0.999)">輪郭</div>
<div class="rt c-r c-dis" style="left:576.0px;top:77.6px;transform:scaleX(0.868)">塗りつぶし</div>
<div class="rt c-g" style="left:502.3px;top:126.0px;transform:scaleX(0.995)">図形</div>
<div class="rt c-r" style="left:650.2px;top:90.5px;transform:scaleX(0.956)">線の幅</div>
<div class="rt c-r" style="left:714.3px;top:90.5px;transform:scaleX(0.949)">色</div>
<div class="rt c-r" style="left:717.3px;top:106.0px;transform:scaleX(0.703)">1</div>
<div class="rt c-r" style="left:756.5px;top:90.5px;transform:scaleX(0.949)">色</div>
<div class="rt c-r" style="left:758.7px;top:106.0px;transform:scaleX(1.047)">2</div>
<div class="rt c-g" style="left:867.3px;top:126.0px;transform:scaleX(0.949)">色</div>
<div class="rt c-r" style="left:1013.1px;top:90.5px;transform:scaleX(0.933)">色の</div>
<div class="rt c-r" style="left:1012.2px;top:106.0px;transform:scaleX(0.983)">編集</div>
<div class="rt c-r" style="left:1059.3px;top:90.5px;transform:scaleX(0.867)">ペイント 3D</div>
<div class="rt c-r" style="left:1059.8px;top:106.0px;transform:scaleX(0.929)">で編集する</div>
<div class="rt c-s" style="left:21.5px;top:709.0px;transform:scaleX(0.926)">769, 420px</div>
<div class="rt c-s" style="left:336.5px;top:709.0px;transform:scaleX(0.937)">1366 × 728px</div>
<div class="rt c-s" style="left:1189.5px;top:709.0px;transform:scaleX(0.896)">100%</div>
<div id="work"><div id="web">
<div id="strip" style="top:145px"></div>
<div id="hband"></div><div id="hbar"></div><div id="htitle">居宅サービス計画書（２） 一覧</div>
<div class="bbtn" style="left:1190px;width:76px">新規の追加</div>
<div class="bbtn" style="left:1269px;width:37px">出力</div>
<div class="bbtn" style="left:1309px;width:37px">戻る</div>
<div class="info" style="left:9px;top:299px"><b>かな名:</b>こたけ とみえ</div>
<div class="info" style="left:145px;top:299px"><b>名:</b>小竹 富江</div>
<div class="info" style="left:236px;top:299px"><b>生年月日:</b>昭和05年2月19日　93歳</div>
<div class="info" style="left:442px;top:299px"><b>性別:</b>女性</div>
<div id="iband"></div>
<div class="info" style="left:9px;top:322px"><b>介護保険情報</b></div>
<div class="info" style="left:99px;top:322px">介護度:要介護1</div>
<div class="cell hd" style="left:11px;top:356px;width:434px;height:50px;"><div style="line-height:48px">生活全般の解決すべき課題(ニーズ)</div></div>
<div class="cell hd" style="left:444px;top:356px;width:743px;height:26px;"><div style="line-height:24px">目標</div></div>
<div class="cell hd" style="left:444px;top:381px;width:248px;height:25px;"><div style="line-height:23px">長期目標</div></div>
<div class="cell hd" style="left:691px;top:381px;width:125px;height:25px;"><div style="line-height:23px">(期間)</div></div>
<div class="cell hd" style="left:815px;top:381px;width:248px;height:25px;"><div style="line-height:23px">短期目標</div></div>
<div class="cell hd" style="left:1062px;top:381px;width:125px;height:25px;"><div style="line-height:23px">(期間)</div></div>
<div class="cell hd" style="left:1186px;top:356px;width:162px;height:50px;"><div style="line-height:48px"><span style="font-weight:normal">メニュー</span></div></div>
<div class="cell  c1" style="left:11px;top:405px;width:63px;height:52px;"><div class="sel" style="top:13px"><svg style="left:0;top:0" width="30" height="20" viewBox="0 0 30 20"><rect x="9" y="9" width="1" height="1" fill="#f5b27a"/><path d="M17 8 L21.300 12.300 L25.600 8" fill="none" stroke="#111" stroke-width="2"/></svg></div></div>
<div class="cell " style="left:73px;top:405px;width:372px;height:52px;"><div class="tx" style="top:0px">水分を摂る量の判断がご自身ではわかりづらく、脱水症になりやすい。<br>また、R5/7/8には、尿路感染症で入院となりました。高齢になり、状態<br>観察が必要な状況です</div></div>
<div class="cell " style="left:444px;top:405px;width:248px;height:52px;"><div class="tx">体調管理ができ、快適に過ごす</div></div>
<div class="cell " style="left:691px;top:405px;width:125px;height:52px;"><div class="dt">2023-08-03</div><div class="dt" style="top:17.6px">～</div><div class="dt" style="top:33.2px">2024-02-28</div></div>
<div class="cell " style="left:815px;top:405px;width:248px;height:52px;"><div class="tx">適切な水分量や栄養摂取ができる</div></div>
<div class="cell " style="left:1062px;top:405px;width:125px;height:52px;"><div class="dt">2023-08-03</div><div class="dt" style="top:17.6px">～</div><div class="dt" style="top:33.2px">2023-10-31</div></div>
<div class="cell " style="left:1186px;top:405px;width:51px;height:52px;"><div class="sbtn" style="left:8px;top:18px;width:33px">編集</div></div>
<div class="cell " style="left:1236px;top:405px;width:50px;height:52px;"><div class="sbtn" style="left:8px;top:18px;width:32px">表示</div></div>
<div class="cell " style="left:1285px;top:405px;width:63px;height:52px;"><div class="sbtn" style="left:14px;top:18px;width:33px">削除</div></div>
<div class="cell ev c1" style="left:11px;top:456px;width:63px;height:53px;"><div class="sel" style="top:14px"><svg style="left:0;top:0" width="30" height="20" viewBox="0 0 30 20"><rect x="9" y="7" width="1" height="1" fill="#e8862a"/><rect x="9" y="13" width="1" height="1" fill="#e8862a"/><path d="M17 8 L21.300 12.300 L25.600 8" fill="none" stroke="#111" stroke-width="2"/></svg></div></div>
<div class="cell ev" style="left:73px;top:456px;width:372px;height:53px;"><div class="tx" style="top:1px">入院中は、ADL低下し、ご自身では身の回りの事が出来なかった。退院<br>後は、状態を見ながら、身の回りの支援が必要です。出来る事は自分で<br>行いたい</div></div>
<div class="cell ev" style="left:444px;top:456px;width:248px;height:53px;"><div class="tx">入院前の生活状況に戻る</div></div>
<div class="cell ev" style="left:691px;top:456px;width:125px;height:53px;"><div class="dt">2023-08-03</div><div class="dt" style="top:17.6px">～</div><div class="dt" style="top:34.2px">2024-02-28</div></div>
<div class="cell ev" style="left:815px;top:456px;width:248px;height:53px;"><div class="tx">身の回りの手助けを受け、不自由なく過ごせる</div></div>
<div class="cell ev" style="left:1062px;top:456px;width:125px;height:53px;"><div class="dt">2023-08-03</div><div class="dt" style="top:17.6px">～</div><div class="dt" style="top:34.2px">2023-10-31</div></div>
<div class="cell ev" style="left:1186px;top:456px;width:51px;height:53px;"><div class="sbtn" style="left:8px;top:18px;width:33px;color:#1a5fa8">編集</div></div>
<div class="cell ev" style="left:1236px;top:456px;width:50px;height:53px;"><div class="sbtn" style="left:8px;top:18px;width:32px;color:#1a5fa8">表示</div></div>
<div class="cell ev" style="left:1285px;top:456px;width:63px;height:53px;"><div class="sbtn" style="left:14px;top:18px;width:33px">削除</div></div>
<div class="cell  c1" style="left:11px;top:508px;width:63px;height:52px;"><div class="sel" style="top:13px"><svg style="left:0;top:0" width="30" height="20" viewBox="0 0 30 20"><rect x="9" y="7" width="1" height="1" fill="#f2a860"/><rect x="9" y="13" width="1" height="1" fill="#f2a860"/><path d="M17 8 L21.300 12.300 L25.600 8" fill="none" stroke="#111" stroke-width="2"/></svg></div></div>
<div class="cell " style="left:73px;top:508px;width:372px;height:52px;"><div class="tx" style="top:8px">入院を機に歩行が困難になり、車椅子介助で移動となる。前のように歩<br>けるようになりたい</div></div>
<div class="cell " style="left:444px;top:508px;width:248px;height:52px;"><div class="tx">転倒なく移動できる</div></div>
<div class="cell " style="left:691px;top:508px;width:125px;height:52px;"><div class="dt">2023-08-03</div><div class="dt" style="top:16.6px">～</div><div class="dt" style="top:33.2px">2024-02-28</div></div>
<div class="cell " style="left:815px;top:508px;width:248px;height:52px;"><div class="tx">リハビリを受け、歩けるようになる</div></div>
<div class="cell " style="left:1062px;top:508px;width:125px;height:52px;"><div class="dt">2023-08-03</div><div class="dt" style="top:16.6px">～</div><div class="dt" style="top:33.2px">2023-10-31</div></div>
<div class="cell " style="left:1186px;top:508px;width:51px;height:52px;"><div class="sbtn" style="left:8px;top:18px;width:33px">編集</div></div>
<div class="cell " style="left:1236px;top:508px;width:50px;height:52px;"><div class="sbtn" style="left:8px;top:18px;width:32px">表示</div></div>
<div class="cell " style="left:1285px;top:508px;width:63px;height:52px;"><div class="sbtn" style="left:14px;top:18px;width:33px">削除</div></div>
<div class="cell ev c1" style="left:11px;top:559px;width:63px;height:52px;"><div class="sel" style="top:14px"><svg style="left:0;top:0" width="30" height="20" viewBox="0 0 30 20"><rect x="9" y="11" width="1" height="1" fill="#e04030"/><path d="M17 8 L21.300 12.300 L25.600 8" fill="none" stroke="#111" stroke-width="2"/></svg></div></div>
<div class="cell ev" style="left:73px;top:559px;width:372px;height:52px;"><div class="tx" style="top:8px">入浴後に過呼吸の発作が出やすいので注意が必要。安心してお風呂に入<br>りたい。</div></div>
<div class="cell ev" style="left:444px;top:559px;width:248px;height:52px;"><div class="tx">安全に入浴し、清潔保持が出来る。</div></div>
<div class="cell ev" style="left:691px;top:559px;width:125px;height:52px;"><div class="dt">2023-08-03</div><div class="dt" style="top:17.6px">～</div><div class="dt" style="top:33.2px">2024-02-28</div></div>
<div class="cell ev" style="left:815px;top:559px;width:248px;height:52px;"><div class="tx">見守りの中、短時間での入浴を心掛ける。</div></div>
<div class="cell ev" style="left:1062px;top:559px;width:125px;height:52px;"><div class="dt">2023-08-03</div><div class="dt" style="top:17.6px">～</div><div class="dt" style="top:33.2px">2023-10-31</div></div>
<div class="cell ev" style="left:1186px;top:559px;width:51px;height:52px;"><div class="sbtn" style="left:8px;top:18px;width:33px">編集</div></div>
<div class="cell ev" style="left:1236px;top:559px;width:50px;height:52px;"><div class="sbtn" style="left:8px;top:18px;width:32px">表示</div></div>
<div class="cell ev" style="left:1285px;top:559px;width:63px;height:52px;"><div class="sbtn" style="left:14px;top:18px;width:33px">削除</div></div>
<div class="cell  c1" style="left:11px;top:610px;width:63px;height:53px;"><div class="sel" style="top:14px"><svg style="left:0;top:0" width="30" height="20" viewBox="0 0 30 20"><rect x="9" y="6" width="1" height="1" fill="#f0a040"/><rect x="9" y="8" width="1" height="1" fill="#f0a040"/><rect x="9" y="12" width="1" height="1" fill="#e8862a"/><path d="M17 8 L21.300 12.300 L25.600 8" fill="none" stroke="#111" stroke-width="2"/></svg></div></div>
<div class="cell " style="left:73px;top:610px;width:372px;height:53px;"><div class="tx" style="top:17px">閉じこもりに注意が必要。部屋から出かけて気分転換してほしい。</div></div>
<div class="cell " style="left:444px;top:610px;width:248px;height:53px;"><div class="tx">気分転換できる。</div></div>
<div class="cell " style="left:691px;top:610px;width:125px;height:53px;"><div class="dt">2023-08-03</div><div class="dt" style="top:17.6px">～</div><div class="dt" style="top:34.2px">2024-02-28</div></div>
<div class="cell " style="left:815px;top:610px;width:248px;height:53px;"><div class="tx">自室から出かける事で刺激を受けられる。</div></div>
<div class="cell " style="left:1062px;top:610px;width:125px;height:53px;"><div class="dt">2024-08-03</div><div class="dt" style="top:17.6px">～</div><div class="dt" style="top:34.2px">2023-10-31</div></div>
<div class="cell " style="left:1186px;top:610px;width:51px;height:53px;"><div class="sbtn" style="left:8px;top:18px;width:33px">編集</div></div>
<div class="cell " style="left:1236px;top:610px;width:50px;height:53px;"><div class="sbtn" style="left:8px;top:18px;width:32px">表示</div></div>
<div class="cell " style="left:1285px;top:610px;width:63px;height:53px;"><div class="sbtn" style="left:14px;top:18px;width:33px">削除</div></div>
<svg id="annot" style="left:0;top:0;z-index:3" width="1350" height="728" viewBox="0 0 1350 728"><path d="M1274.9 455.2 Q1268.1 455.6 1263.8 456.5 Q1259.4 457.3 1254.5 457.6 Q1249.6 457.9 1245.8 457.4 Q1242.1 456.9 1239.0 454.9 Q1236 452.9 1233.2 450.1 Q1230.4 447.4 1228.6 444.0 Q1226.7 440.6 1225.9 436.2 Q1225.1 431.9 1224.9 426.9 Q1224.8 422 1225.2 417.7 Q1225.5 413.4 1226.7 409.4 Q1227.9 405.3 1231.3 402.6 Q1234.7 399.8 1238.1 396.8 Q1241.5 393.8 1246.2 392.9 Q1250.8 392 1256.3 392.0 Q1261.9 392 1266.8 392.4 Q1271.8 392.7 1276.8 393.8 Q1281.7 394.8 1286.0 396.6 Q1290.3 398.5 1292.8 401.6 Q1295.3 404.7 1296.7 409.0 Q1298 413.4 1298.5 418.4 Q1299 423.3 1298.9 428.2 Q1298.8 433.2 1297.7 436.9 Q1296.5 440.6 1294.0 444.0 Q1291.6 447.4 1288.8 450.8 Q1286 454.2 1283.2 456.6 Q1280.5 459.1 1277.1 460.4 L1273.7 461.6" fill="none" stroke="#ed1c24" stroke-width="2.8" stroke-linecap="round" stroke-linejoin="round"/><path d="M774.5 484 V487 M773 485.500 H776" stroke="#ed1c24" stroke-width="1" fill="none"/></svg>
</div></div>
<div id="vscroll"><div id="vthumb"></div></div>
<div id="hscroll"><div id="hthumb"></div></div>
<div id="status">
  <div class="ssep" style="left:155px"></div>
  <div class="ssep" style="left:311px"></div>
  <div class="ssep" style="left:467px"></div>
  <div class="ssep" style="left:623px"></div>
  <div class="ssep" style="left:1167px"></div>
</div>
<svg id="svg-status" style="left:0;top:0;z-index:6;pointer-events:none" width="1366" height="728" viewBox="0 0 1366 728">
<defs><linearGradient id="gBtn" x1="0" y1="0" x2="0" y2="1"><stop offset="0" stop-color="#ffffff"/><stop offset="1" stop-color="#dcdcdc"/></linearGradient></defs>
<g fill="none" stroke="#5c5c5c" stroke-width="1.8">
<path d="M1354.300 156 L1357.500 152.800 L1360.700 156"/>
<path d="M1354.300 675.200 L1357.500 678.400 L1360.700 675.200"/>
<path d="M9.700 690.300 L6.500 693.500 L9.700 696.700"/>
<path d="M1339.300 690.300 L1342.500 693.500 L1339.300 696.700"/>
</g>
<g fill="none" stroke="#1f3a5f" stroke-width="1.1"><path d="M9.500 710.500 V721.500 M4 716 H15"/><path d="M7.500 712.500 L9.500 710.500 L11.500 712.500 M7.500 719.500 L9.500 721.500 L11.500 719.500 M6 714 L4 716 L6 718 M13 714 L15 716 L13 718"/></g>
<g fill="none" stroke="#1f3a5f" stroke-width="1.1"><rect x="165.500" y="710.500" width="8" height="8" stroke-dasharray="2 1.200"/><path d="M162.500 718 V711 M161 712.500 L162.500 710.800 L164 712.500"/><path d="M166 721 H173.500 M172 719.500 L173.700 721 L172 722.500"/></g>
<g fill="none" stroke="#1f3a5f" stroke-width="1.100"><rect x="321.500" y="710.500" width="8" height="8" fill="#e9f1f8"/><path d="M318.500 718 V711 M317 712.500 L318.500 710.800 L320 712.500"/><path d="M322 721 H329.500 M328 719.500 L329.700 721 L328 722.500"/></g>
<circle cx="1232" cy="716" r="7.500" fill="url(#gBtn)" stroke="#8a8a8a" stroke-width="1"/><rect x="1228" y="715" width="8" height="2" fill="#555"/>
<circle cx="1354" cy="716" r="7.500" fill="url(#gBtn)" stroke="#8a8a8a" stroke-width="1"/><rect x="1350" y="715" width="8" height="2" fill="#555"/><rect x="1353" y="712" width="2" height="8" fill="#555"/>
<rect x="1250.500" y="713.500" width="84" height="3" fill="#e7eaea" stroke="#d2d2d2" stroke-width="1"/>
<path d="M1288 707 H1298 V719 L1293 724 L1288 719 Z" fill="#0a74d8"/>
</svg>
</body>
</html>
